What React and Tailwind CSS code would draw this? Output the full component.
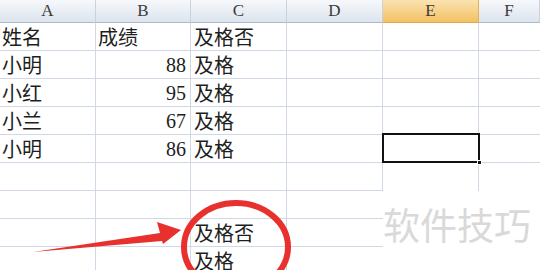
import React from "react";

const rows = [
  ["姓名", "成绩", "及格否"],
  ["小明", "88", "及格"],
  ["小红", "95", "及格"],
  ["小兰", "67", "及格"],
  ["小明", "86", "及格"],
  ["", "", ""],
  ["", "", ""],
  ["", "", "及格否"],
  ["", "", "及格"],
];

const letters = ["A", "B", "C", "D", "E", "F"];

const cjk = { fontFamily: '"Noto Sans CJK SC", "Noto Sans", sans-serif' };
const serif = { fontFamily: '"Liberation Serif", "DejaVu Serif", serif' };

// Column header strip
const HeaderRow = () => (
  <>
    {letters.map((l) =>
      l === "E" ? (
        <div
          key={l}
          className="h-[23px] flex items-center justify-center border-r border-b border-r-[#e2b25e] border-b-[#e0a84a] bg-gradient-to-b from-[#fbe2b0] to-[#f2c162] text-[17px] text-[#3a3a3a]"
          style={serif}
        >
          {l}
        </div>
      ) : (
        <div
          key={l}
          className="h-[23px] flex items-center justify-center border-r border-b border-r-[#c7d2de] border-b-[#a6bad0] bg-gradient-to-b from-[#f6f8fb] to-[#dde4ed] text-[17px] text-[#3a3a3a]"
          style={serif}
        >
          {l}
        </div>
      )
    )}
  </>
);

const Row = ({ cells, r }) => {
  const [a, b, c] = cells;
  const lower = r >= 6;
  return (
    <>
      <div className="h-[28px] pl-[2px] border-r border-b border-[#d0d7e5] text-[20px] leading-[28px] text-[#1e1e1e]" style={cjk}>
        {a}
      </div>
      <div
        className="h-[28px] pr-[4px] border-r border-b border-[#d0d7e5] text-[20px] leading-[28px] text-[#1e1e1e] text-right"
        style={r === 0 ? cjk : serif}
      >
        {r === 0 ? <span className="block text-left pl-[2px]">{b}</span> : b}
      </div>
      <div className="h-[28px] pl-[3px] border-r border-b border-[#d0d7e5] text-[20px] leading-[28px] text-[#1e1e1e] whitespace-nowrap" style={cjk}>
        {c}
      </div>
      <div className={lower ? "h-[28px] border-b border-[#d0d7e5]" : "h-[28px] border-r border-b border-[#d0d7e5]"} />
      <div
        className={
          lower
            ? "h-[28px]"
            : r === 5
            ? "h-[28px] border-r border-[#d0d7e5]"
            : "relative h-[28px] border-r border-b border-[#d0d7e5]"
        }
      >
        {r === 4 && (
          <div className="absolute -left-px -top-[2px] w-[98px] h-[30px] border-2 border-[#111]">
            <div className="absolute -right-[4px] -bottom-[4px] w-[5px] h-[5px] bg-[#111] border border-white" />
          </div>
        )}
      </div>
      <div className={lower || r === 5 ? "h-[28px]" : "h-[28px] border-b border-[#d0d7e5]"} />
    </>
  );
};

export default function App() {
  return (
    <div className="relative w-[540px] h-[270px] overflow-hidden bg-white">
      <div className="grid grid-cols-[96px_95px_96px_96px_96px_1fr]">
        <HeaderRow />
        {rows.map((cells, r) => (
          <Row key={r} cells={cells} r={r} />
        ))}
      </div>

      {/* watermark */}
      <div className="absolute left-[383px] top-[206px] text-[37px] leading-none text-[#d9d9d9] whitespace-nowrap" style={cjk}>
        软件技巧
      </div>

      {/* red annotation */}
      <svg className="absolute left-0 top-0 pointer-events-none" width="540" height="270" viewBox="0 0 540 270">
        <ellipse cx="236" cy="247" rx="52" ry="44" fill="none" stroke="#e8302e" strokeWidth="6" />
        <polygon points="33,252 160,233 157,222 181,230 163,244 162,241" fill="#e8302e" />
      </svg>
    </div>
  );
}
